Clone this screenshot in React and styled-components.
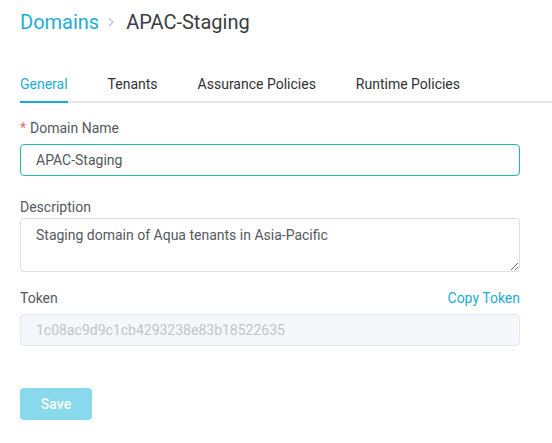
import React, { useState } from 'react';
import styled, { createGlobalStyle } from 'styled-components';

const GlobalStyle = createGlobalStyle`
  body {
    margin: 0;
    background: #fff;
    font-family: Roboto, "Liberation Sans", Arial, sans-serif;
  }
  * {
    box-sizing: border-box;
  }
`;

// 페이지 전체
const Page = styled.div`
  padding: 10px 0 0 20px;
`;

// 상단 경로
const Breadcrumb = styled.div`
  display: flex;
  align-items: center;
  height: 24px;
  font-size: 20px;
  line-height: 24px;
`;

const Crumb = styled.span`
  color: ${({ active }) => (active ? '#3a3d42' : '#22acd6')};
`;

const Chevron = styled.svg`
  margin: 0 11px 0 8px;
`;

// 탭 영역
const TabBar = styled.div`
  display: flex;
  gap: 40px;
  margin-top: 29px;
  border-bottom: 2px solid #e4e7ed;
`;

const Tab = styled.div`
  height: 40px;
  padding-top: 2px;
  line-height: 38px;
  margin-bottom: -2px;
  font-size: 14px;
  color: ${({ active }) => (active ? '#20aed6' : '#303133')};
  border-bottom: 2px solid ${({ active }) => (active ? '#0eb0d8' : 'transparent')};
  cursor: pointer;
`;

// 폼 영역
const Form = styled.div`
  padding-right: 32px;
`;

const Field = styled.div`
  margin-top: ${({ top }) => top}px;
`;

const LabelRow = styled.div`
  display: flex;
  justify-content: space-between;
  align-items: center;
  height: 20px;
  margin-bottom: ${({ gap }) => gap}px;
  font-size: 14px;
  line-height: 20px;
  color: #55585e;
`;

const Required = styled.span`
  color: #f56c6c;
  margin-right: 4px;
`;

const LinkButton = styled.a`
  color: #22acd6;
  cursor: pointer;
`;

const Input = styled.input`
  display: block;
  width: 100%;
  height: 32px;
  padding: 0 15px;
  font-family: inherit;
  font-size: 14px;
  color: ${({ disabled }) => (disabled ? '#c0c4cc' : '#55585e')};
  background: ${({ disabled }) => (disabled ? '#f5f7fa' : '#fff')};
  border: 1px solid ${({ focused }) => (focused ? '#1cbea6' : '#e4e7ed')};
  border-radius: 4px;
  outline: none;
`;

const TextArea = styled.textarea`
  display: block;
  width: 100%;
  height: 54px;
  padding: 6px 15px 4px;
  font-family: inherit;
  font-size: 14px;
  line-height: 20px;
  color: #55585e;
  border: 1px solid #dcdfe6;
  border-radius: 4px;
  outline: none;
  resize: vertical;
`;

const SaveButton = styled.button`
  margin-top: 42px;
  width: 72px;
  height: 32px;
  font-family: inherit;
  font-size: 14px;
  font-weight: 500;
  color: #fff;
  background: #88d9ec;
  border: none;
  border-radius: 4px;
`;

const tabs = ['General', 'Tenants', 'Assurance Policies', 'Runtime Policies'];

const App = () => {
  const [activeTab, setActiveTab] = useState('General');
  const [name, setName] = useState('APAC-Staging');
  const [description, setDescription] = useState(
    'Staging domain of Aqua tenants in Asia-Pacific'
  );

  return (
    <Page>
      <GlobalStyle />
      <Breadcrumb>
        <Crumb>Domains</Crumb>
        <Chevron width="8" height="12" viewBox="0 0 8 12">
          <path d="M2 2l4 4-4 4" fill="none" stroke="#c0c4cc" strokeWidth="1.3" />
        </Chevron>
        <Crumb active>APAC-Staging</Crumb>
      </Breadcrumb>
      <TabBar>
        {tabs.map((tab) => (
          <Tab
            key={tab}
            active={tab === activeTab}
            onClick={() => setActiveTab(tab)}
          >
            {tab}
          </Tab>
        ))}
      </TabBar>
      <Form>
        <Field top={15}>
          <LabelRow gap={6}>
            <span>
              <Required>*</Required>
              Domain Name
            </span>
          </LabelRow>
          <Input focused value={name} onChange={(e) => setName(e.target.value)} />
        </Field>
        <Field top={21}>
          <LabelRow gap={1}>
            <span>Description</span>
          </LabelRow>
          <TextArea
            value={description}
            onChange={(e) => setDescription(e.target.value)}
          />
        </Field>
        <Field top={16}>
          <LabelRow gap={6}>
            <span>Token</span>
            <LinkButton>Copy Token</LinkButton>
          </LabelRow>
          <Input disabled value="1c08ac9d9c1cb4293238e83b18522635" readOnly />
        </Field>
        <SaveButton disabled>Save</SaveButton>
      </Form>
    </Page>
  );
};

export default App;
